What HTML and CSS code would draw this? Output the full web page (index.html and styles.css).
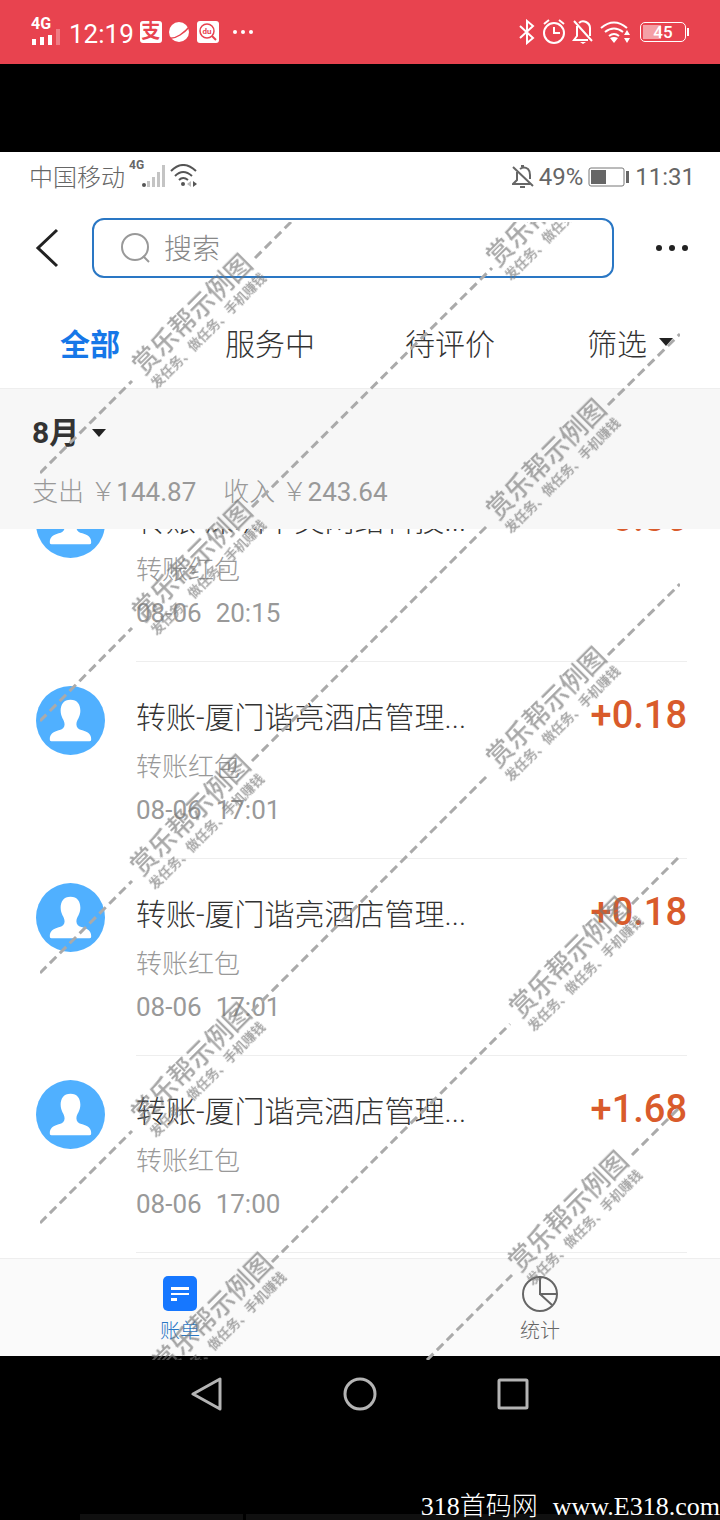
FILE: index.html
```html
<!DOCTYPE html>
<html lang="zh-CN">
<head>
    <meta charset="UTF-8">
    <meta name="viewport" content="width=device-width, initial-scale=1.0">
    <title>账单</title>
    <link rel="stylesheet" href="styles.css">
</head>
<body>
    <div class="page">
        <header class="phone-bar">
            <div class="phone-left">
                <div class="signal">
                    <span class="signal-label">4G</span>
                    <svg width="30" height="16" viewBox="0 0 30 16"><path fill="#fff" d="M1 10h4v6H1zM9 8h4v8H9zM17 6h4v10h-4z"/><path fill="#fff" opacity=".3" d="M25 0h4v16h-4z"/></svg>
                </div>
                <span class="phone-time">12:19</span>
                <span class="app-badge">支</span>
                <svg width="22" height="22" viewBox="0 0 22 22"><circle cx="11" cy="11" r="10" fill="#fff"/><path d="M0 17q6 1 12-3t10-9" fill="none" stroke="#e8434f" stroke-width="1.500"/></svg>
                <svg class="du-icon" width="22" height="22" viewBox="0 0 22 22"><rect width="22" height="22" rx="3" fill="#fff"/><circle cx="10" cy="10" r="7" fill="none" stroke="#e8434f" stroke-width="1.500"/><path d="M15 15l4 4" stroke="#e8434f" stroke-width="2"/><text x="10" y="13" text-anchor="middle" class="du-text">du</text></svg>
                <svg class="more-dots" width="22" height="6" viewBox="0 0 22 6"><g fill="#fff"><circle cx="3" cy="3" r="2"/><circle cx="11" cy="3" r="2"/><circle cx="19" cy="3" r="2"/></g></svg>
            </div>
            <div class="phone-right">
                <svg width="18" height="26" viewBox="0 0 18 26" fill="none" stroke="#fff" stroke-width="2"><path d="M2 7l13 12-6 5V2l6 5L2 19"/></svg>
                <svg width="24" height="26" viewBox="0 0 24 26" fill="none" stroke="#fff" stroke-width="2"><circle cx="12" cy="14" r="10"/><path d="M12 8v6h6M2 5l5-4M22 5l-5-4"/></svg>
                <svg width="22" height="26" viewBox="0 0 22 26" fill="none" stroke="#fff" stroke-width="2"><path d="M5 7v10l-3 4h14M7 4q3-3 7-1 4 2 4 6v8M2 2l18 20"/><path d="M8 23h6l-3 2z" fill="#fff" stroke="none"/></svg>
                <svg width="30" height="24" viewBox="0 0 30 24"><g fill="none" stroke="#fff" stroke-width="2"><path d="M1 8q13-11 26 0M5 12q9-7 18 0M9 16q5-4 10 0"/></g><path fill="#fff" d="M10 18q4-2 8 0l-4 5zM24 15l3-5 3 5zM24 18l3 5 3-5z"/></svg>
                <div class="phone-battery"><span>45</span></div>
            </div>
        </header>

        <main class="app">
            <div class="status-bar">
                <div class="carrier">
                    <span>中国移动</span>
                    <span class="carrier-net">4G</span>
                    <svg class="carrier-bars" width="24" height="22" viewBox="0 0 24 22"><circle cx="2" cy="20" r="2" fill="#555"/><path fill="#c4c4c4" d="M5 16h3v6H5zM10 12h3v10h-3zM15 7h3v15h-3zM20 0h3v22h-3z"/></svg>
                    <svg width="28" height="24" viewBox="0 0 28 24"><g fill="none" stroke="#555" stroke-width="2"><path d="M1 7q12-12 25 0M5 12q8-8 17 0M9 16q4-4 9 0"/></g><circle cx="13" cy="20" r="2" fill="#555"/><path d="M23 17l4 3-4 3z" fill="#555"/><path d="M21 17l-4 3 4 3z" fill="#bbb"/></svg>
                </div>
                <div class="status-right">
                    <svg width="22" height="24" viewBox="0 0 22 24" fill="none" stroke="#666" stroke-width="2"><path d="M5 7v8l-4 4h17M8 4q4-3 8 0 2 2 2 6v4M1 2l20 19M8 22h5M9 1h3"/></svg>
                    <span>49%</span>
                    <svg width="41" height="20" viewBox="0 0 41 20"><rect x="1" y="1" width="35" height="18" rx="2" fill="none" stroke="#777" stroke-width="1"/><path fill="#666" d="M3 3h15v14H3zM38 4h3v12h-3z"/></svg>
                    <span class="status-time">11:31</span>
                </div>
            </div>

            <div class="search-row">
                <button type="button" class="icon-button back" aria-label="返回">
                    <svg width="26" height="40" viewBox="0 0 26 40"><path d="M23 2L4 20l19 18" fill="none" stroke="#222" stroke-width="3"/></svg>
                </button>
                <label class="search-box">
                    <svg width="30" height="30" viewBox="0 0 30 30" fill="none" stroke="#999" stroke-width="2"><circle cx="14" cy="14" r="13"/><path d="M22 23l6 6"/></svg>
                    <input type="text" placeholder="搜索" aria-label="搜索">
                </label>
                <button type="button" class="icon-button more" aria-label="更多">
                    <svg width="36" height="8" viewBox="0 0 36 8" fill="#222"><circle cx="5" cy="4" r="3"/><circle cx="18" cy="4" r="3"/><circle cx="31" cy="4" r="3"/></svg>
                </button>
            </div>

            <nav class="tabs">
                <button type="button" class="tab active">全部</button>
                <button type="button" class="tab">服务中</button>
                <button type="button" class="tab">待评价</button>
                <button type="button" class="tab">筛选<span class="caret"></span></button>
            </nav>

            <section class="summary">
                <button type="button" class="month">8月<span class="caret"></span></button>
                <p class="totals"><span>支出 ￥<span class="sum">144.87</span></span><span>收入 ￥<span class="sum">243.64</span></span></p>
            </section>

            <div class="bill-list">
                <article class="bill">
                    <svg class="avatar" viewBox="0 0 70 70"><circle cx="35" cy="35" r="35" fill="#50b0ff"/><path fill="#fff" d="M35 14c-7 0-10 5-10 11 0 7 4 9 4 14 0 3-2 5-6 6-6 2-9 4-9 9 0 2 1 2 3 2h36c2 0 3 0 3-2 0-5-3-7-9-9-4-1-6-3-6-6 0-5 4-7 4-14 0-6-3-11-10-11z"/></svg>
                    <div class="bill-body">
                        <div class="bill-head"><h2>转账-深圳中英网络科技...</h2><span class="amount">+0.36</span></div>
                        <p class="kind">转账红包</p>
                        <p class="date"><span>08-06</span><span>20:15</span></p>
                    </div>
                </article>
                <article class="bill">
                    <svg class="avatar" viewBox="0 0 70 70"><circle cx="35" cy="35" r="35" fill="#50b0ff"/><path fill="#fff" d="M35 14c-7 0-10 5-10 11 0 7 4 9 4 14 0 3-2 5-6 6-6 2-9 4-9 9 0 2 1 2 3 2h36c2 0 3 0 3-2 0-5-3-7-9-9-4-1-6-3-6-6 0-5 4-7 4-14 0-6-3-11-10-11z"/></svg>
                    <div class="bill-body">
                        <div class="bill-head"><h2>转账-厦门谐亮酒店管理...</h2><span class="amount">+0.18</span></div>
                        <p class="kind">转账红包</p>
                        <p class="date"><span>08-06</span><span>17:01</span></p>
                    </div>
                </article>
                <article class="bill">
                    <svg class="avatar" viewBox="0 0 70 70"><circle cx="35" cy="35" r="35" fill="#50b0ff"/><path fill="#fff" d="M35 14c-7 0-10 5-10 11 0 7 4 9 4 14 0 3-2 5-6 6-6 2-9 4-9 9 0 2 1 2 3 2h36c2 0 3 0 3-2 0-5-3-7-9-9-4-1-6-3-6-6 0-5 4-7 4-14 0-6-3-11-10-11z"/></svg>
                    <div class="bill-body">
                        <div class="bill-head"><h2>转账-厦门谐亮酒店管理...</h2><span class="amount">+0.18</span></div>
                        <p class="kind">转账红包</p>
                        <p class="date"><span>08-06</span><span>17:01</span></p>
                    </div>
                </article>
                <article class="bill">
                    <svg class="avatar" viewBox="0 0 70 70"><circle cx="35" cy="35" r="35" fill="#50b0ff"/><path fill="#fff" d="M35 14c-7 0-10 5-10 11 0 7 4 9 4 14 0 3-2 5-6 6-6 2-9 4-9 9 0 2 1 2 3 2h36c2 0 3 0 3-2 0-5-3-7-9-9-4-1-6-3-6-6 0-5 4-7 4-14 0-6-3-11-10-11z"/></svg>
                    <div class="bill-body">
                        <div class="bill-head"><h2>转账-厦门谐亮酒店管理...</h2><span class="amount">+1.68</span></div>
                        <p class="kind">转账红包</p>
                        <p class="date"><span>08-06</span><span>17:00</span></p>
                    </div>
                </article>
            </div>

            <nav class="bottom-nav">
                <button type="button" class="nav-item active">
                    <svg width="36" height="36" viewBox="0 0 36 36"><rect x="1" y="0" width="34" height="35" rx="5" fill="#1677ff"/><path fill="#fff" d="M9 11h18v3H9zM9 17h18v2H9zM9 22h6v3H9z"/></svg>
                    账单
                </button>
                <button type="button" class="nav-item">
                    <svg width="36" height="36" viewBox="0 0 36 36" fill="none" stroke="#666" stroke-width="2"><circle cx="18" cy="18" r="17"/><path d="M18 1v17h17M18 18l12 11"/></svg>
                    统计
                </button>
            </nav>
        </main>

        <footer class="android-nav">
            <div class="android-keys">
                <button type="button" aria-label="后退"><svg width="32" height="34" viewBox="0 0 32 34"><path d="M29 2v30L2 17z" fill="none" stroke="#b4b4b4" stroke-width="3" stroke-linejoin="round"/></svg></button>
                <button type="button" aria-label="主页"><svg width="34" height="34" viewBox="0 0 34 34"><circle cx="17" cy="17" r="15" fill="none" stroke="#b4b4b4" stroke-width="3"/></svg></button>
                <button type="button" aria-label="最近任务"><svg width="32" height="32" viewBox="0 0 32 32"><rect x="2" y="2" width="28" height="28" rx="1" fill="none" stroke="#b4b4b4" stroke-width="3"/></svg></button>
            </div>
            <div class="dock"><span></span><span></span></div>
            <p class="site-mark"><span>318首码网</span><span>www.E318.com</span></p>
        </footer>

        <!-- repeated diagonal stamp over the page -->
        <svg class="stamps" viewBox="40 222 640 1138">
            <g class="stamp-lines">
                <path d="M40 473L132 381M255 258L291 222"/>
                <path d="M40 721L132 628M252 507L492 268"/>
                <path d="M40 973L132 881M252 761L489 524M608 405L680 334"/>
                <path d="M40 1223L132 1131M252 1011L489 774M608 655L680 584"/>
                <path d="M272 1262L510 1024M632 904L680 856"/>
                <path d="M427 1360L512 1275M632 1155L680 1107"/>
            </g>
            <g class="stamp-text">
                <g transform="translate(191 313) rotate(-45)"><text class="big" y="11">赏乐帮示例图</text><text class="small" y="29">发任务、做任务、手机赚钱</text></g>
                <g transform="translate(545 205) rotate(-45)"><text class="big" y="11">赏乐帮示例图</text><text class="small" y="29">发任务、做任务、手机赚钱</text></g>
                <g transform="translate(191 560) rotate(-45)"><text class="big" y="11">赏乐帮示例图</text><text class="small" y="29">发任务、做任务、手机赚钱</text></g>
                <g transform="translate(545 458) rotate(-45)"><text class="big" y="11">赏乐帮示例图</text><text class="small" y="29">发任务、做任务、手机赚钱</text></g>
                <g transform="translate(189 814) rotate(-45)"><text class="big" y="11">赏乐帮示例图</text><text class="small" y="29">发任务、做任务、手机赚钱</text></g>
                <g transform="translate(545 706) rotate(-45)"><text class="big" y="11">赏乐帮示例图</text><text class="small" y="29">发任务、做任务、手机赚钱</text></g>
                <g transform="translate(190 1062) rotate(-45)"><text class="big" y="11">赏乐帮示例图</text><text class="small" y="29">发任务、做任务、手机赚钱</text></g>
                <g transform="translate(568 956) rotate(-45)"><text class="big" y="11">赏乐帮示例图</text><text class="small" y="29">发任务、做任务、手机赚钱</text></g>
                <g transform="translate(211 1312) rotate(-45)"><text class="big" y="11">赏乐帮示例图</text><text class="small" y="29">发任务、做任务、手机赚钱</text></g>
                <g transform="translate(567 1210) rotate(-45)"><text class="big" y="11">赏乐帮示例图</text><text class="small" y="29">发任务、做任务、手机赚钱</text></g>
            </g>
        </svg>
    </div>
</body>
</html>
```
FILE: styles.css
```css
* {
    box-sizing: border-box;
}
body {
    margin: 0;
    background-color: #000;
    font-family: Roboto, "Noto Sans CJK SC", sans-serif;
    color: #333;
}
h2, p {
    margin: 0;
    font-weight: 300;
}
button {
    border: none;
    background: none;
    padding: 0;
    color: inherit;
    font-family: inherit;
    cursor: pointer;
}
svg {
    display: block;
    flex-shrink: 0;
}
.page {
    position: relative;
    overflow: hidden;
}

/* outer phone status bar */
.phone-bar {
    display: flex;
    justify-content: space-between;
    align-items: center;
    height: 64px;
    padding: 0 34px 0 31px;
    background-color: #e8434f;
    color: #fff;
}
.phone-left, .phone-right {
    display: flex;
    align-items: center;
    gap: 6px;
}
.signal-label {
    display: block;
    font-size: 16px;
    line-height: 10px;
    font-weight: 700;
}
.phone-time {
    margin-left: 2px;
    padding-top: 3px;
    font-size: 26px;
}
.app-badge {
    width: 22px;
    height: 22px;
    border-radius: 3px;
    background-color: #fff;
    color: #e8434f;
    font-size: 19px;
    font-weight: 700;
    line-height: 21px;
    text-align: center;
}
.du-icon {
    margin-left: 1px;
}
.du-text {
    font-size: 8px;
    font-weight: 700;
    fill: #e8434f;
}
.more-dots {
    margin-left: 7px;
}
.phone-battery {
    position: relative;
    width: 46px;
    height: 20px;
    margin-left: 4px;
    border: 1px solid #fff;
    border-radius: 5px;
    background: linear-gradient(90deg, #f4a0a6 0 18px, transparent 18px) 2px 2px / 40px 14px no-repeat;
    font-size: 17px;
    line-height: 18px;
    text-align: center;
    font-weight: 500;
}
.phone-battery::after {
    content: "";
    position: absolute;
    right: -4px;
    top: 5px;
    width: 2px;
    height: 8px;
    background-color: #fff;
}

/* app */
.app {
    margin-top: 88px;
    background-color: #fff;
}
.status-bar {
    display: flex;
    justify-content: space-between;
    align-items: center;
    height: 50px;
    padding: 0 25px 0 29px;
    color: #666;
    font-size: 24px;
}
.carrier, .status-right {
    display: flex;
    align-items: center;
    gap: 5px;
}
.carrier {
    gap: 4px;
    padding-bottom: 3px;
    font-weight: 300;
}
.carrier-net {
    align-self: flex-start;
    font-size: 12px;
    font-weight: 700;
}
.carrier-bars {
    margin-left: -6px;
}
.status-time {
    margin-left: 1px;
}
.search-row {
    display: flex;
    align-items: center;
    padding: 16px 30px 0 34px;
}
.search-box {
    flex: 1;
    display: flex;
    align-items: center;
    gap: 13px;
    height: 60px;
    margin: 0 40px 0 32px;
    padding: 0 27px;
    border: 2px solid #2a77c4;
    border-radius: 12px;
}
.search-box input {
    flex: 1;
    min-width: 0;
    padding: 3px 0 0;
    border: none;
    outline: none;
    background: none;
    font-family: inherit;
    font-size: 28px;
    font-weight: 300;
}
.search-box input::placeholder {
    color: #888;
    opacity: 1;
}
.tabs {
    display: grid;
    grid-template-columns: repeat(4, 1fr);
    height: 111px;
    padding-top: 18px;
    border-bottom: 1px solid #eee;
}
.tab {
    display: flex;
    justify-content: center;
    align-items: center;
    gap: 12px;
    font-size: 30px;
    font-weight: 300;
}
.tab.active {
    color: #1677e8;
    font-weight: 700;
}
.caret {
    border: 7px solid transparent;
    border-top: 8px solid #222;
    border-bottom: 0;
}
.summary {
    padding: 24px 32px 19px;
    background-color: #f7f7f7;
}
.month {
    display: flex;
    align-items: center;
    gap: 13px;
    font-size: 30px;
    line-height: 40px;
    font-weight: 700;
}
.totals {
    display: flex;
    gap: 27px;
    margin-top: 21px;
    font-size: 26px;
    line-height: 36px;
    color: #999;
}
.sum {
    font-weight: 400;
}

/* bills */
.bill-list {
    overflow: hidden;
    padding-bottom: 5px;
}
.bill {
    display: flex;
    gap: 31px;
    padding: 0 33px 0 36px;
}
.bill:first-child {
    margin-top: -64px;
}
.avatar {
    width: 69px;
    height: 69px;
    margin-top: 24px;
}
.bill-body {
    flex: 1;
    min-width: 0;
    height: 197px;
    padding-top: 29px;
    border-bottom: 1px solid #eee;
}
.bill-head {
    display: flex;
    justify-content: space-between;
    align-items: center;
    height: 48px;
}
.bill h2 {
    font-size: 30px;
    white-space: nowrap;
}
.amount {
    color: #d95b2b;
    font-size: 38px;
    font-weight: 500;
}
.kind, .date {
    color: #999;
    font-size: 26px;
    line-height: 43px;
}
.kind {
    margin-top: 7px;
}
.date {
    display: flex;
    gap: 14px;
    font-weight: 400;
}

/* bottom tabs */
.bottom-nav {
    display: grid;
    grid-template-columns: repeat(2, 1fr);
    border-top: 1px solid #eee;
    background-color: #fafafa;
}
.nav-item {
    display: flex;
    flex-direction: column;
    align-items: center;
    gap: 4px;
    padding: 17px 0 10px;
    color: #666;
    font-size: 20px;
    line-height: 30px;
    font-weight: 300;
}
.nav-item.active {
    color: #2a77c4;
}

.android-nav {
    position: relative;
    padding-top: 21px;
}
.android-keys {
    display: flex;
    justify-content: center;
    gap: 120px;
}
.android-keys button {
    display: flex;
    align-items: center;
}
.dock {
    display: flex;
    gap: 3px;
    margin-top: 103px;
    padding-left: 80px;
}
.dock span {
    width: 163px;
    height: 6px;
    background-color: #101010;
}
.dock span + span {
    flex: 1;
}
.site-mark {
    position: absolute;
    right: 0;
    bottom: 0;
    display: flex;
    gap: 15px;
    color: #fff;
    font-family: "Liberation Serif", "Noto Sans CJK SC", serif;
    font-size: 26px;
    line-height: 26px;
}

/* stamps */
.stamps {
    position: absolute;
    left: 40px;
    top: 222px;
    width: calc(100% - 80px);
    pointer-events: none;
}
.stamp-lines {
    fill: none;
    stroke: #aaa;
    stroke-width: 3;
    stroke-dasharray: 9 5;
}
.stamp-text {
    fill: #777;
    opacity: 0.65;
    text-anchor: middle;
    font-family: "Noto Sans CJK SC", sans-serif;
}
.stamp-text .big {
    font-size: 26px;
    font-weight: 500;
}
.stamp-text .small {
    font-size: 13px;
    font-weight: 700;
}
```
